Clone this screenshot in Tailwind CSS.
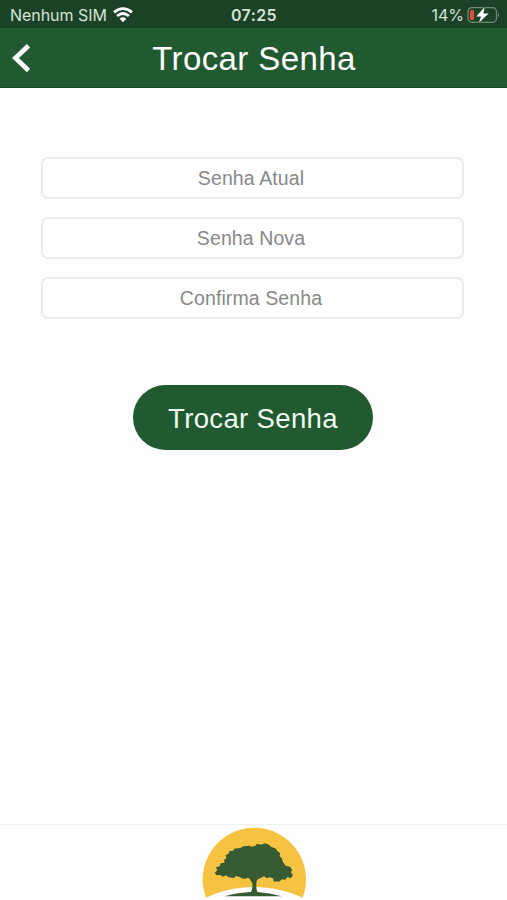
<!DOCTYPE html>
<html lang="pt-BR">
<head>
<meta charset="utf-8">
<title>Trocar Senha</title>
<script src="https://cdn.jsdelivr.net/npm/@tailwindcss/browser@4"></script>
</head>
<body class="bg-white">
<div class="flex h-[900px] w-[507px] flex-col overflow-hidden bg-[#fefefe] font-['Liberation_Sans',Arial,sans-serif]">
  <div class="grid h-7 shrink-0 grid-cols-3 items-center bg-[#1b4227] pt-0.5 font-['Inter',sans-serif] text-[16px] leading-none text-[#d5e2d6]">
    <div class="flex items-center pl-[10px]">
      <span class="whitespace-nowrap tracking-[-0.05px]">Nenhum SIM</span>
      <svg class="ml-1.5 h-[16px] w-[20px] shrink-0" viewBox="0 0 20 16" fill="none" stroke="#fff" stroke-width="2.8">
        <path d="M1 5.4Q10-2.2 19 5.4"/><path d="M4.1 9Q10 3.9 15.9 9"/><path d="M10 15.2L6.6 11.8Q10 8.9 13.4 11.8Z" fill="#fff" stroke="none"/>
      </svg>
    </div>
    <div class="pl-px text-center font-semibold tracking-[0.4px]">07:25</div>
    <div class="flex items-center justify-end pr-[7px]">
      <span class="mr-[3px]">14%</span>
      <svg class="h-[18px] w-[33px]" viewBox="0 0 33 18">
        <rect x="1" y="1.7" width="28.5" height="14.6" rx="4" fill="none" stroke="#718975" stroke-width="1.3"/>
        <path d="M31 6.5Q33 9 31 11.5Z" fill="#718975"/>
        <rect x="3" y="4" width="4" height="10" rx="1.5" fill="#ed4b3c"/>
        <path d="M17.7 1L9.2 10.4H14L11.8 17L21.6 7.5H16.4Z" fill="#fff" stroke="#1b4227" stroke-width="1.5" paint-order="stroke"/>
      </svg>
    </div>
  </div>
  <header class="grid h-[60px] shrink-0 grid-cols-[50px_1fr_50px] items-center border-b border-[#164824] bg-[#215930] text-white">
    <svg class="ml-3 h-[30px] w-[20px]" viewBox="0 0 20 30" fill="none" stroke="#fff" stroke-width="4.8"><path d="M16.5 2.8L3.4 15L16.5 27.4"/></svg>
    <h1 class="pt-0.5 pl-px text-center text-[33px] leading-none tracking-[0.4px]">Trocar Senha</h1>
  </header>
  <main class="flex flex-1 flex-col items-center pt-[69px]">
    <form class="mr-[2px] flex w-[423px] flex-col gap-[18px]">
      <input class="h-[42px] rounded-[7px] border-2 border-[#ebebeb] bg-white pt-px pr-[3px] text-center text-[19.5px] tracking-[0.1px] placeholder:text-[#888]" type="password" placeholder="Senha Atual">
      <input class="h-[42px] rounded-[7px] border-2 border-[#ebebeb] bg-white pt-px pr-[3px] text-center text-[19.5px] tracking-[0.1px] placeholder:text-[#888]" type="password" placeholder="Senha Nova">
      <input class="h-[42px] rounded-[7px] border-2 border-[#ebebeb] bg-white pt-px pr-[3px] text-center text-[19.5px] tracking-[0.1px] placeholder:text-[#888]" type="password" placeholder="Confirma Senha">
    </form>
    <button class="mr-px mt-[66px] h-[65px] w-[240px] rounded-full bg-[#215930] pt-0.5 text-[27.5px] leading-none tracking-[0.35px] text-[#f2fbf2]">Trocar Senha</button>
  </main>
  <footer class="flex h-[76px] shrink-0 justify-center border-t border-[#f0f0f0]">
    <svg class="mr-[-3px] h-[75px] w-[130px]" viewBox="0 30 390 225">
      <path d="M48 248A155 155 0 1 1 338 248C247 205 137 205 48 248Z" fill="#f5c341"/>
      <path d="M104 244Q145 232 183 231Q191 213 185 196L174 188L166 191Q158 193 151 187L137 183L133 189L116 187L108 181L99 185L91 180L80 181L74 173L82 165L78 157L89 153L92 145L104 143L102 135L109 130L107 121L117 115L118 108L130 107L132 101L151 99L160 94L178 92L184 95L195 93L201 86L213 89L225 85L237 89L244 96L256 100L262 108L271 115L268 123L275 129L279 142L287 152L300 155L307 166L302 171L309 180L302 190L293 186L285 194L276 193L267 200L257 199L252 202L249 190L239 187L231 190L222 184L210 190L201 194Q196 214 202 231Q240 233 275 244Z" fill="#365a31"/>
      <path d="M183 192L190 202L199 191" fill="none" stroke="#365a31" stroke-width="7"/>
    </svg>
  </footer>
</div>
</body>
</html>
